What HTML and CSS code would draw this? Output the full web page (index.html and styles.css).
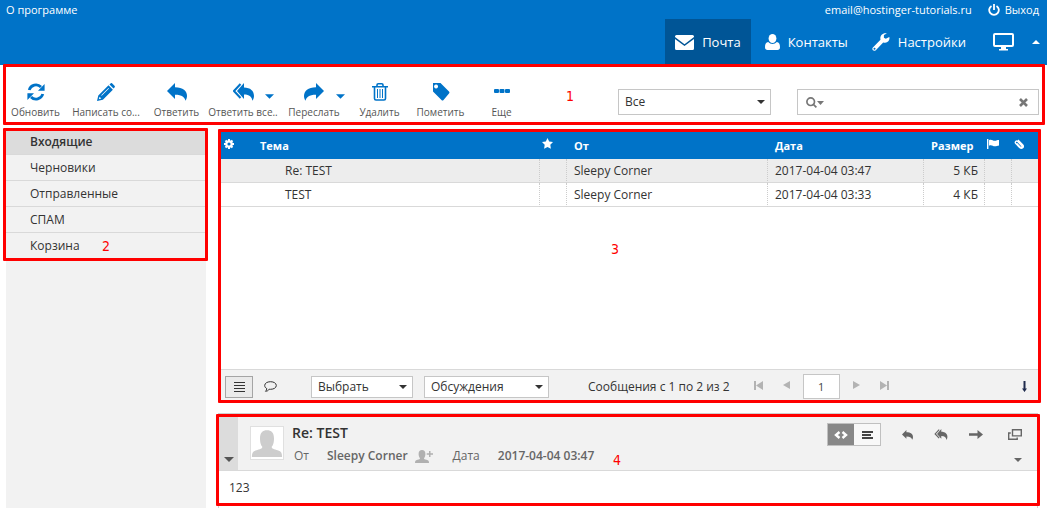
FILE: index.html
```html
<!DOCTYPE html>
<html lang="ru">
<head>
<meta charset="utf-8">
<title>Почта — Входящие</title>
<link rel="stylesheet" href="styles.css">
</head>
<body>
<svg class="sprite" aria-hidden="true">
  <symbol id="reply" viewBox="0 0 20 18"><path d="M8 0v4.200c8 0 12 3.500 12 8.800 0 1.800-.6 3.500-1.600 4.800C18 14.500 15 11.800 8 11.800V16L0 8z"/></symbol>
  <symbol id="reply-all" viewBox="0 0 21 18"><path d="M11 0v4.500c6.500 0 10 3.500 10 8.500 0 1.800-.6 3.500-1.600 4.800C19 14 16.500 11.500 11 11.500V16L4 8z"/><path d="M7.500 1 1 8l6.500 7" fill="none" stroke="currentColor" stroke-width="2"/></symbol>
  <symbol id="caret" viewBox="0 0 10 5"><path d="M0 0h10L5 5z"/></symbol>
</svg>

<header class="header">
  <div class="topline">
    <a href="#about">О программе</a>
    <div class="account">
      <span>email@hostinger-tutorials.ru</span>
      <a class="logout" href="#logout"><svg width="12" height="12" viewBox="0 0 12 12" fill="none" stroke="currentColor" stroke-width="1.800"><path d="M3.500 1.900a4.800 4.800 0 1 0 5 0M6 0v6"/></svg>Выход</a>
    </div>
  </div>
  <nav class="nav">
    <a class="tab active" href="#mail"><svg width="19" height="15" viewBox="0 0 19 15"><path d="M0 1.500Q0 0 1.500 0h16Q19 0 19 1.500v.6L9.500 9.200 0 2.100zM0 4l9.500 7L19 4v9.500q0 1.500-1.500 1.500h-16Q0 15 0 13.500z"/></svg>Почта</a>
    <a class="tab" href="#contacts"><svg width="15" height="16" viewBox="0 0 15 16"><ellipse cx="7.500" cy="4.500" rx="3.900" ry="4.500"/><path d="M3.200 8C1 8.300 0 10 0 13.300 0 15 1 16 2.500 16h10c1.500 0 2.500-1 2.500-2.700C15 10 14 8.300 11.800 8c-2.300 2.500-6.300 2.500-8.600 0z"/></svg>Контакты</a>
    <a class="tab" href="#settings"><svg width="18" height="18" viewBox="0 0 18 18"><path fill-rule="evenodd" d="M14.800.4 11.900 2v2.700l1.900 1.100 3.500-1.900c.8 2.500-.8 5.600-4.200 5.800-.7 0-1.300-.1-1.900-.3l-7.400 7.800c-2 1.900-4.700-.7-2.900-2.800l7.600-7.700C7.600 3.200 10.200-.5 14.800.4zM2.400 14.700a1 1 0 1 0 1.100 1.100 1 1 0 0 0-1.100-1.100z"/></svg>Настройки</a>
    <a class="view" href="#view" aria-label="Вид"><svg width="21" height="18" viewBox="0 0 21 18"><path fill-rule="evenodd" d="M2 0h17q2 0 2 2v10q0 2-2 2h-6v2h2v1.500H6V16h2v-2H2q-2 0-2-2V2q0-2 2-2zm0 2v10h17V2z"/></svg></a>
    <a class="collapse" href="#collapse" aria-label="Свернуть"><svg width="8" height="4" viewBox="0 0 8 4"><path d="M0 4h8L4 0z"/></svg></a>
  </nav>
</header>

<section class="toolbar marked">
  <div class="actions">
    <button class="action"><svg width="18" height="18" viewBox="0 0 18 18"><path d="M2.200 7A7 7 0 0 1 14 4M15.800 11A7 7 0 0 1 4 14" fill="none" stroke="currentColor" stroke-width="2.800"/><path d="M17.600 1v6.700H11zM.4 17v-6.700H7z"/></svg>Обновить</button>
    <button class="action wide"><svg width="18" height="18" viewBox="0 0 18 18"><path fill-rule="evenodd" d="m11.500 2.300 4.400 4.400-10 10L0 18l1.300-5.500zM2.600 13.700l-.8 2.500 2.500-.7zM11.500 5l-7.300 7.200.5.500L12 5.500z"/><path d="m12.500 1.500 1-1c.7-.7 1.200-.7 1.800 0l2.200 2.200c.6.600.6 1.100 0 1.700l-1 1z"/></svg>Написать со...</button>
    <button class="action"><svg width="20" height="18"><use href="#reply"/></svg>Ответить</button>
    <div class="split">
      <button class="action"><svg width="21" height="18"><use href="#reply-all"/></svg>Ответить все..</button>
      <button class="drop" aria-label="Варианты ответа"><svg width="9" height="5"><use href="#caret"/></svg></button>
    </div>
    <div class="split">
      <button class="action"><svg class="flip" width="20" height="18"><use href="#reply"/></svg>Переслать</button>
      <button class="drop" aria-label="Варианты пересылки"><svg width="9" height="5"><use href="#caret"/></svg></button>
    </div>
    <button class="action"><svg width="16" height="18" viewBox="0 0 16 18" fill="none" stroke="currentColor"><path d="M0 3.700h16M2.500 4v11.500q0 1.500 1.500 1.500h8q1.500 0 1.500-1.500V4M5 3.500V2q0-1.200 1.200-1.200h3.600Q11 .8 11 2v1.500" stroke-width="1.600"/><path d="M5.500 6v9M8 6v9M10.500 6v9"/></svg>Удалить</button>
    <button class="action"><svg width="18" height="18" viewBox="0 0 18 18"><path fill-rule="evenodd" d="M1 0h7.500L17 8.500q1 1 0 2L11.500 17q-1 1-2 0L1 8.500zM4 1.500a2 2 0 1 0 .1 0z"/></svg>Пометить</button>
    <button class="action"><svg width="16" height="18" viewBox="0 0 16 18"><path d="M1 6h3q1 0 1 1v2q0 1-1 1H1q-1 0-1-1V7q0-1 1-1zm5.500 0h3q1 0 1 1v2q0 1-1 1h-3q-1 0-1-1V7q0-1 1-1zM12 6h3q1 0 1 1v2q0 1-1 1h-3q-1 0-1-1V7q0-1 1-1z"/></svg>Еще</button>
  </div>
  <span class="mark mark-tools">1</span>
  <div class="picker filter"><select aria-label="Фильтр"><option>Все</option></select><svg width="8" height="4" viewBox="0 0 10 5"><use href="#caret"/></svg></div>
  <form class="search">
    <button type="button" aria-label="Параметры поиска"><svg width="18" height="11" viewBox="0 0 18 11"><circle cx="4.700" cy="4.700" r="3.800" fill="none" stroke="currentColor" stroke-width="1.700"/><path d="m7 8.200 1.200-1.200L11 9.800 9.800 11zM11 4h7l-3.500 4z"/></svg></button>
    <input type="text" aria-label="Поиск">
    <button type="reset" aria-label="Очистить"><svg width="9" height="9" viewBox="0 0 9 9"><path d="m1 1 7 7M8 1 1 8" stroke="currentColor" stroke-width="2.600"/></svg></button>
  </form>
</section>

<main class="main">
  <aside class="sidebar">
    <nav class="folders marked">
      <a class="folder current" href="#inbox">Входящие</a>
      <a class="folder" href="#drafts">Черновики</a>
      <a class="folder" href="#sent">Отправленные</a>
      <a class="folder" href="#spam">СПАМ</a>
      <a class="folder" href="#trash">Корзина</a>
      <span class="mark mark-folders">2</span>
    </nav>
  </aside>

  <div class="content">
    <section class="list marked">
      <table class="messages">
        <colgroup><col class="c-gear"><col><col class="c-icon"><col class="c-from"><col class="c-date"><col class="c-size"><col class="c-icon"><col class="c-icon"></colgroup>
        <thead><tr>
          <th class="icon"><button aria-label="Настройка списка"><svg width="10" height="10" viewBox="0 0 10 10"><circle cx="5" cy="5" r="2.700" fill="none" stroke="currentColor" stroke-width="2.200"/><path d="M5 0v2M5 8v2M0 5h2M8 5h2M1.500 1.500l1.300 1.300M7.200 7.200l1.300 1.300M8.500 1.500 7.200 2.800M2.800 7.200 1.500 8.500" stroke="currentColor" stroke-width="2"/></svg></button></th>
          <th>Тема</th>
          <th class="icon" aria-label="Прочитано"><svg width="11" height="11" viewBox="0 0 11 11"><path d="m5.500 0 1.700 3.500 3.800.6-2.700 2.700.6 3.900-3.400-1.800L2.100 10.700l.6-3.900L0 4.100l3.800-.6z"/></svg></th>
          <th>От</th><th>Дата</th><th class="size">Размер</th>
          <th class="icon" aria-label="Флаг"><svg width="12" height="10" viewBox="0 0 12 10"><path d="M0 0h1.400v10H0zM2 1.200c2.500-1.500 4 .8 6 .5 1.200-.1 2.500-.8 4-.8v5.500c-1.500 0-2.800.8-4 .8-2 .2-3.500-2-6-.5z"/></svg></th>
          <th class="icon" aria-label="Вложение"><svg width="10" height="10" viewBox="0 0 10 10" fill="none" stroke="currentColor" stroke-width="1.300"><path d="m2.800 4.500 3.500 3.600c1.100 1 2.500-.2 1.400-1.400L3.800 2.600C2.300 1.200.4 3 1.800 4.500l3.800 4c2.300 2 5-.5 3-2.800L4 1"/></svg></th>
        </tr></thead>
        <tbody>
          <tr class="selected"><td></td><td class="subject">Re: TEST</td><td class="line"></td><td class="line">Sleepy Corner</td><td class="line">2017-04-04 03:47</td><td class="line size">5 КБ</td><td class="line"></td><td class="line"></td></tr>
          <tr><td></td><td class="subject">TEST</td><td class="line"></td><td class="line">Sleepy Corner</td><td class="line">2017-04-04 03:33</td><td class="line size">4 КБ</td><td class="line"></td><td class="line"></td></tr>
        </tbody>
      </table>
      <span class="mark mark-list">3</span>
      <footer class="listbar">
        <button class="mode on" aria-label="Список"><svg width="11" height="10" viewBox="0 0 11 10"><path d="M0 0h11v1H0zM0 3h11v1H0zM0 6h11v1H0zM0 9h11v1H0z"/></svg></button>
        <button class="mode" aria-label="Обсуждения"><svg width="13" height="11" viewBox="0 0 13 11" fill="none" stroke="currentColor"><path d="M6.500.7c3.300 0 5.800 1.500 5.800 3.800S9.800 8.300 6.500 8.300l-1.300-.1C4.500 9.500 3 10.300 1.500 10.300c.8-.6 1.200-1.500 1.300-2.700C1.500 6.900.7 5.800.7 4.500.7 2.200 3.200.7 6.500.7z"/></svg></button>
        <div class="picker choose"><select aria-label="Выбрать"><option>Выбрать</option></select><svg width="8" height="4" viewBox="0 0 10 5"><use href="#caret"/></svg></div>
        <div class="picker threads"><select aria-label="Обсуждения"><option>Обсуждения</option></select><svg width="8" height="4" viewBox="0 0 10 5"><use href="#caret"/></svg></div>
        <span class="count">Сообщения с 1 по 2 из 2</span>
        <div class="pager">
          <button aria-label="Первая"><svg width="9" height="9" viewBox="0 0 9 9"><path d="M0 0h2v9H0zM9 0v9L2 4.500z"/></svg></button>
          <button aria-label="Назад"><svg width="7" height="8" viewBox="0 0 7 8"><path d="M7 0v8L0 4z"/></svg></button>
          <input type="text" value="1" aria-label="Страница">
          <button aria-label="Вперёд"><svg width="7" height="8" viewBox="0 0 7 8"><path d="M0 0v8l7-4z"/></svg></button>
          <button aria-label="Последняя"><svg width="9" height="9" viewBox="0 0 9 9"><path d="M7 0h2v9H7zM0 0v9l7-4.500z"/></svg></button>
        </div>
        <button class="toggle" aria-label="Скрыть просмотр"><svg width="5" height="11" viewBox="0 0 5 11"><path d="M1.500 0h2v7.500H5L2.500 11 0 7.500h1.500z"/></svg></button>
      </footer>
    </section>

    <section class="preview marked">
      <div class="summary">
        <button class="expand" aria-label="Развернуть"><svg width="10" height="5"><use href="#caret"/></svg></button>
        <svg class="avatar" width="34" height="34" viewBox="0 0 34 34"><path fill="#fff" d="M0 0h34v34H0z"/><path fill="#cdcdcd" d="M1 32c0-4.500 1-6 4-7 5-1.500 7-2 7-4-1.600-2-2.200-4-2.400-7.500C9.200 6.500 12 3.500 17 3.500s7.800 3 7.400 10C24.200 17 23.600 19 22 21c0 2 2 2.500 7 4 3 1 4 2.500 4 7z"/></svg>
        <div class="details">
          <h2>Re: TEST</h2>
          <div class="meta">
            <span>От</span>
            <b class="sender">Sleepy Corner</b>
            <button class="add" aria-label="Добавить контакт"><svg width="18" height="13" viewBox="0 0 18 13"><path d="M0 13c0-2 .5-2.800 2.500-3.300C4.300 9.300 5 9 5 8.200 4 7 3.600 5.500 3.600 4 3.600 1.500 4.800 0 7 0s3.400 1.500 3.400 4C10.400 5.500 10 7 9 8.200c0 .8.700 1.100 2.500 1.500 2 .5 2.500 1.300 2.500 3.300zM14 1h1.500v2.200H18v1.500h-2.500V7H14V4.700h-2.300V3.200H14z"/></svg></button>
            <span class="datelabel">Дата</span>
            <b>2017-04-04 03:47</b>
          </div>
        </div>
        <div class="tools">
          <div class="toolrow">
            <div class="format">
              <button class="on" aria-label="HTML"><svg width="14" height="8" viewBox="0 0 14 8" fill="none" stroke="currentColor" stroke-width="2.400"><path d="M5.500 1 2 4l3.500 3M8.500 1 12 4 8.500 7"/></svg></button>
              <button aria-label="Текст"><svg width="11" height="8" viewBox="0 0 11 8"><path d="M0 0h11v2H0zM0 3h9v2H0zM0 6h11v2H0z"/></svg></button>
            </div>
            <button aria-label="Ответить"><svg width="11" height="10"><use href="#reply"/></svg></button>
            <button aria-label="Ответить всем"><svg width="14" height="11"><use href="#reply-all"/></svg></button>
            <button aria-label="Переслать"><svg width="14" height="9" viewBox="0 0 14 9"><path d="M0 3.300h8.500V0L14 4.500 8.500 9V5.700H0z"/></svg></button>
            <button aria-label="Открыть в новом окне"><svg width="14" height="11" viewBox="0 0 14 11" fill="none" stroke="currentColor" stroke-width="1.400"><path d="M4.500.7h8.800v6.200H4.500zM2.800 4H.7v6.200h8.500V8.500"/></svg></button>
          </div>
          <button class="more" aria-label="Подробнее"><svg width="8" height="4" viewBox="0 0 10 5"><use href="#caret"/></svg></button>
        </div>
        <span class="mark mark-preview">4</span>
      </div>
      <div class="message">123</div>
    </section>
  </div>
</main>
</body>
</html>
```
FILE: styles.css
```css
* { box-sizing: border-box; }

body {
  margin: 0;
  height: 100vh;
  display: flex;
  flex-direction: column;
  background: #fff;
  color: #333;
  font: 12px/16px "Open Sans", sans-serif;
}

svg { display: block; flex: none; fill: currentColor; }
svg[fill="none"] { fill: none; }
.sprite { position: absolute; width: 0; height: 0; }

a { color: inherit; text-decoration: none; }
button, input, select { margin: 0; padding: 0; border: 0; background: none; color: inherit; font: inherit; }
button { display: flex; align-items: center; justify-content: center; cursor: pointer; }

/* Numbered outlines over the four areas of the window */
.marked { position: relative; }
.marked::after {
  content: "";
  position: absolute;
  inset: -3px;
  border: 3px solid #f00;
  border-radius: 1px;
  pointer-events: none;
}
.mark { position: absolute; color: #f00; font: 14px/16px "DejaVu Sans Condensed", "DejaVu Sans", sans-serif; }

/* Header */
.header { background: #0073c8; color: #fff; }
.topline { display: flex; justify-content: space-between; height: 19px; padding: 0 8px 0 6px; font-size: 11px; line-height: 19px; }
.account, .logout { display: flex; }
.account { gap: 16px; }
.logout { align-items: center; gap: 5px; }
.nav { display: flex; justify-content: flex-end; height: 46px; padding-right: 7px; font-size: 13px; }
.tab { display: flex; align-items: center; gap: 8px; padding: 0 10px; }
.tab + .tab { margin-left: 4px; }
.tab.active { background: #005596; }
.view, .collapse { display: flex; align-items: center; }
.view { margin-left: 17px; }
.collapse { margin-left: 18px; }

/* Toolbar */
.toolbar { display: flex; align-items: flex-start; height: 60px; padding: 0 8px 0 5px; }
.toolbar.marked::after { inset: -1px 2px 0 3px; }
.actions { display: flex; padding-top: 18px; }
.action {
  flex-direction: column;
  gap: 3px;
  width: 61px;
  color: #555;
  font-size: 10px;
  white-space: nowrap;
}
.action svg { color: #0073c8; }
.action.wide { width: 80px; }
.split { position: relative; width: 70px; margin-left: 1px; }
.split .action { width: 100%; }
.drop { position: absolute; right: 4px; top: 11px; color: #0073c8; }
.flip { transform: scaleX(-1); }
.mark-tools { left: 566px; top: 23px; }

.picker { position: relative; display: flex; align-items: center; border: 1px solid #c6c6c6; background: #fff; }
.picker select { width: 100%; height: 100%; padding: 0 6px; appearance: none; outline: 0; }
.picker svg { position: absolute; right: 5px; pointer-events: none; }
.filter { width: 153px; height: 26px; margin: 24px 26px 0 auto; }
.search { display: flex; align-items: center; width: 242px; height: 26px; margin-top: 24px; padding: 0 10px 0 8px; border: 1px solid #c6c6c6; color: #777; }
.search input { flex: 1; min-width: 0; outline: 0; }

/* Folders */
.main { flex: 1; display: flex; min-height: 0; padding: 4px 9px 0 6px; }
.sidebar { width: 200px; background: #f2f2f2; }
.folders.marked::after { inset: -1px -2px -2px -3px; }
.folder { display: block; height: 26px; padding: 0 24px; border-bottom: 1px solid #d9d9d9; line-height: 26px; }
.folder.current { background: #dcdcdc; font-weight: 600; }
.mark-folders { left: 96px; top: 109px; }

/* Message list */
.content { flex: 1; display: flex; flex-direction: column; min-width: 0; padding: 3px 0 0 15px; }
.list { flex: 1; display: flex; flex-direction: column; }
.messages { width: 100%; table-layout: fixed; border-collapse: separate; border-spacing: 0; }
.c-gear { width: 31px; }
.c-icon { width: 27px; }
.c-from { width: 201px; }
.c-date { width: 156px; }
.c-size { width: 61px; }
.messages th { height: 27px; padding: 0 8px; background: #0073c8; color: #fff; font-size: 11px; text-align: left; }
.messages th.icon { padding: 0 3px 4px; }
.messages td { height: 24px; padding: 0 7px; border-bottom: 1px solid #d9d9d9; }
.messages td.subject { padding-left: 33px; }
.messages td.line { border-left: 1px dotted #ccc; }
.messages td.size { padding-right: 6px; text-align: right; }
.messages .selected { background: #ededed; }
.mark-list { left: 390px; top: 109px; }

.listbar { display: flex; align-items: center; height: 31px; margin-top: auto; padding: 3px 11px 0 4px; border-top: 1px solid #d9d9d9; background: #f2f2f2; }
.mode { width: 28px; height: 22px; }
.mode + .mode { margin-left: 3px; }
.mode.on { border: 1px solid #a5a5a5; background: #eaeaea; }
.listbar .picker { height: 22px; }
.listbar .choose { width: 102px; margin-left: 27px; }
.listbar .threads { width: 125px; margin-left: 11px; }
.count { margin-left: 39px; white-space: nowrap; }
.pager { display: flex; align-items: center; gap: 13px; margin-left: 24px; color: #b3b3b3; }
.pager button { height: 16px; padding-bottom: 3px; }
.pager button:first-child { margin-right: 7px; }
.pager button:last-child { margin-left: 7px; }
.pager input { width: 37px; height: 25px; border: 1px solid #c6c6c6; background: #fff; color: #444; font-size: 11px; text-align: center; }
.toggle { margin-left: auto; color: #1f2b4d; }

/* Preview */
.preview { margin-top: 13px; margin-left: -3px; border: 1px solid #d0d0d0; border-bottom: 0; }
.preview.marked::after { inset: 0 -3px 2px -3px; }
.summary { position: relative; display: flex; height: 57px; border-bottom: 1px solid #d9d9d9; background: #f2f2f2; }
.expand { align-items: flex-end; width: 19px; padding-bottom: 8px; background: #dcdcdc; color: #555; }
.avatar { margin: 12px 8px 0 12px; border: 1px solid #e0e0e0; }
.details { padding-top: 8px; }
.details h2 { margin: 0; font-size: 14px; line-height: 22px; font-weight: 600; }
.meta { display: flex; align-items: center; height: 24px; padding-left: 2px; color: #666; }
.meta b { font-weight: 600; }
.sender { margin-left: 18px; }
.add { margin-left: 7px; color: #b0b0b0; }
.datelabel { margin: 0 18px 0 20px; }
.tools { display: flex; flex-direction: column; align-items: flex-end; margin-left: auto; padding: 9px 15px 0 0; color: #666; }
.toolrow { display: flex; align-items: center; gap: 21px; }
.toolrow > button:last-child { margin-left: 4px; }
.format { display: flex; border: 1px solid #c0c0c0; background: #f8f8f8; }
.format button { width: 26px; height: 21px; color: #444; }
.format .on { background: #888; color: #fff; }
.more { margin-top: 12px; }
.mark-preview { left: 394px; top: 38px; }
.message { height: 37px; padding: 9px 10px; }
```
